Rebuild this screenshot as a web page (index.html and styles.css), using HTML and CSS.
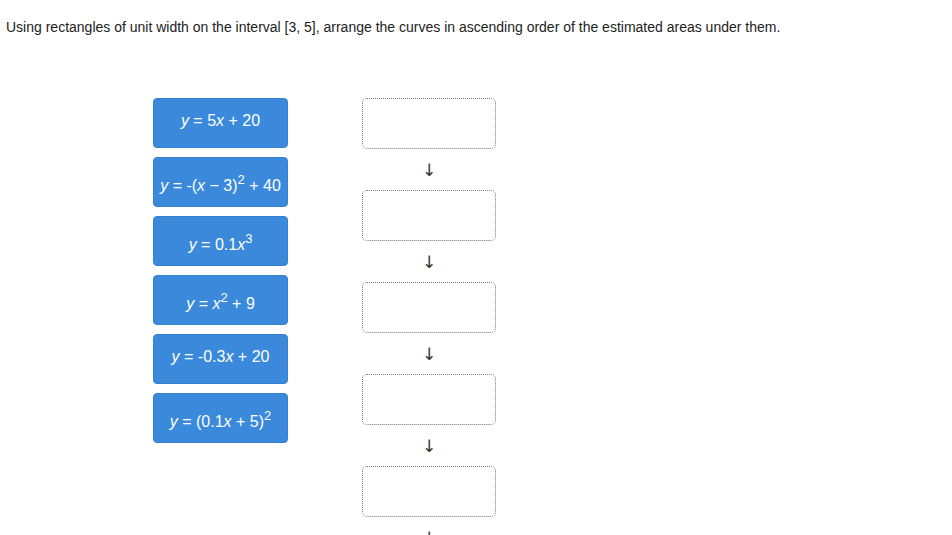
FILE: index.html
```html
<!DOCTYPE html>
<html>
<head>
<meta charset="utf-8">
<link rel="stylesheet" href="styles.css">
</head>
<body>
<p class="question">Using rectangles of unit width on the interval [3, 5], arrange the curves in ascending order of the estimated areas under them.</p>
<div class="board">
  <div class="choices">
    <div class="tile"><span class="expr"><i>y</i> = 5<i>x</i> + 20</span></div>
    <div class="tile tile-sup"><span class="expr"><i>y</i> = -(<i>x</i> &minus; 3)<sup>2</sup> + 40</span></div>
    <div class="tile tile-sup"><span class="expr"><i>y</i> = 0.1<i>x</i><sup>3</sup></span></div>
    <div class="tile tile-sup"><span class="expr"><i>y</i> = <i>x</i><sup>2</sup> + 9</span></div>
    <div class="tile"><span class="expr"><i>y</i> = -0.3<i>x</i> + 20</span></div>
    <div class="tile tile-sup"><span class="expr"><i>y</i> = (0.1<i>x</i> + 5)<sup>2</sup></span></div>
  </div>
  <div class="slots">
    <div class="slot"></div>
    <div class="arrow">&darr;</div>
    <div class="slot"></div>
    <div class="arrow">&darr;</div>
    <div class="slot"></div>
    <div class="arrow">&darr;</div>
    <div class="slot"></div>
    <div class="arrow">&darr;</div>
    <div class="slot"></div>
    <div class="arrow">&darr;</div>
  </div>
</div>
</body>
</html>
```
FILE: styles.css
```css
html, body {
  margin: 0;
  padding: 0;
  background: #ffffff;
  overflow: hidden;
}
body {
  font-family: "Liberation Sans", Arial, sans-serif;
  color: #222;
}
.question {
  margin: 0;
  padding: 18px 0 0 6px;
  font-size: 14px;
  line-height: 18px;
}
.board {
  display: flex;
  gap: 74px;
  padding: 62px 0 0 153px;
}
.choices {
  display: flex;
  flex-direction: column;
  gap: 9px;
}
.tile {
  width: 135px;
  height: 50px;
  box-sizing: border-box;
  background: #3a89da;
  border: 1px solid #3580cf;
  border-radius: 4px;
  color: #fff;
  font-size: 16px;
  display: flex;
  align-items: center;
  justify-content: center;
  white-space: nowrap;
  padding-bottom: 5px;
}
.tile-sup {
  padding-bottom: 0;
  padding-top: 4px;
}
.expr {
  line-height: 18px;
}
.tile sup {
  font-size: 13px;
  line-height: 1;
  vertical-align: 7px;
}
.slots {
  display: flex;
  flex-direction: column;
  width: 134px;
}
.slot {
  height: 51px;
  box-sizing: border-box;
  border: 1px dotted #777;
  border-radius: 5px;
}
.arrow {
  height: 41px;
  display: flex;
  align-items: center;
  justify-content: center;
  font-size: 17px;
  color: #333;
  font-family: "DejaVu Sans", sans-serif;
}
```
